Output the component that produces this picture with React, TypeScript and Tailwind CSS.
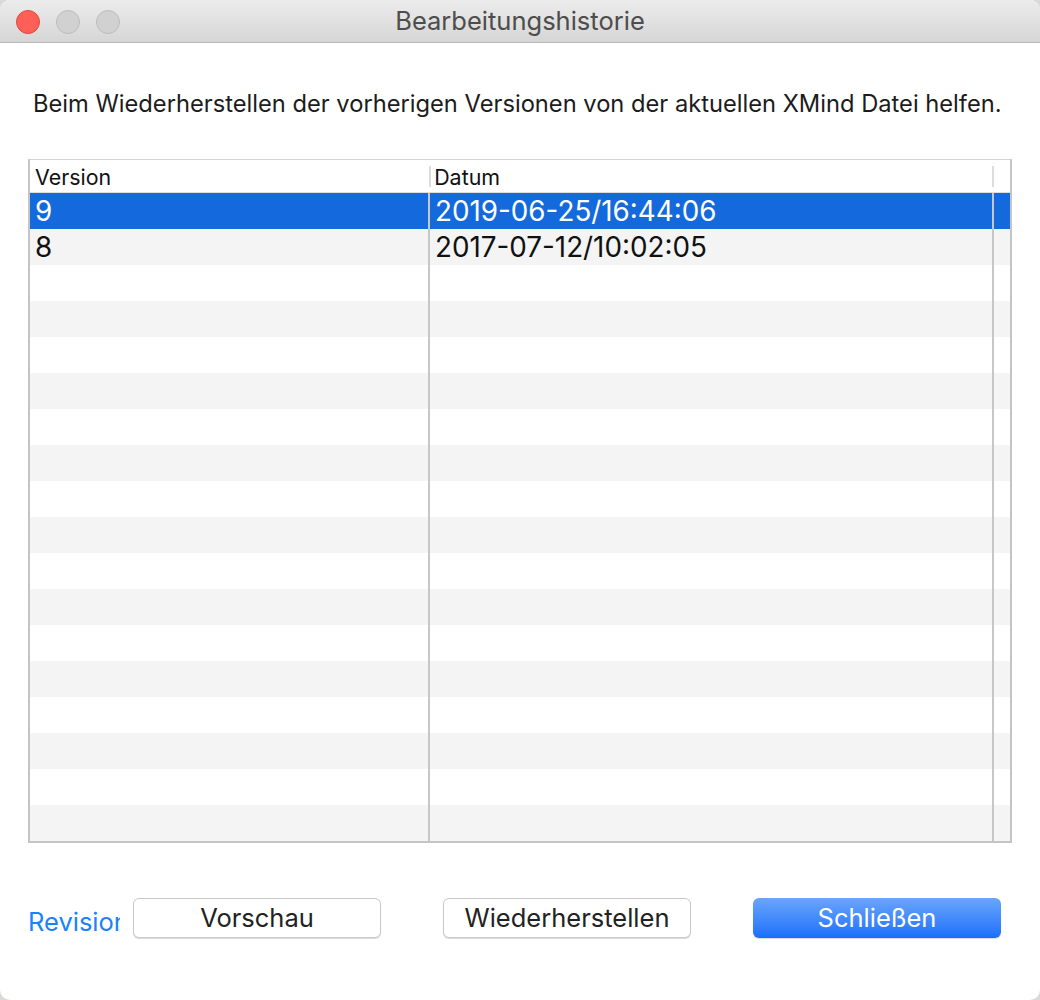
import React from "react";

const rows = [
  { version: "9", date: "2019-06-25/16:44:06" },
  { version: "8", date: "2017-07-12/10:02:05" },
  ...Array.from({ length: 16 }, () => ({ version: "", date: "" })),
];

const font = { fontFamily: "Inter, 'Noto Sans', sans-serif" };

export default function App() {
  return (
    <div className="h-[1000px] w-[1040px] bg-[#d9d9d6]" style={font}>
      <div className="flex h-full flex-col overflow-hidden rounded-[10px] bg-white">
        {/* title bar */}
        <div className="relative flex h-[43px] shrink-0 items-center justify-center border-b border-[#b9b9b9] bg-gradient-to-b from-[#ececec] to-[#d6d6d6]">
          <div className="absolute left-[16px] top-[10px] flex gap-[16px]">
            <span className="h-[24px] w-[24px] rounded-full border border-[#e2463f] bg-[#fe5f57]" />
            <span className="h-[24px] w-[24px] rounded-full border border-[#bcbcbc] bg-[#d1d1d1]" />
            <span className="h-[24px] w-[24px] rounded-full border border-[#bcbcbc] bg-[#d1d1d1]" />
          </div>
          <span className="text-[25.5px] leading-none text-[#4d4d4d]">Bearbeitungshistorie</span>
        </div>

        <div className="flex flex-col px-[28px]">
          <p className="mt-[47px] h-[28px] whitespace-nowrap pl-[5px] text-[23.7px] leading-[28px] text-[#1c1c1c]">
            Beim Wiederherstellen der vorherigen Versionen von der aktuellen XMind Datei helfen.
          </p>

          {/* table */}
          <div className="mt-[41px] w-[984px] border-t border-b-2 border-l-2 border-r-2 border-t-[#d4d4d4] border-b-[#c4c4c4] border-l-[#c4c4c4] border-r-[#c4c4c4]">
            <div className="flex h-[33px] items-center border-b border-[#dedede] bg-white text-[21.4px] text-[#111]">
              <div className="flex h-full w-[400px] items-center pl-[5px] pt-[2px]">Version</div>
              <div className="h-[21px] w-[2px] bg-[#dcdcdc]" />
              <div className="flex h-full w-[562px] items-center pl-[3px] pt-[2px]">Datum</div>
              <div className="h-[21px] w-[2px] bg-[#dcdcdc]" />
              <div className="w-[16px]" />
            </div>
            {rows.map((r, i) => {
              const selected = i === 0;
              const bg = selected ? "bg-[#1469dd] text-white" : i % 2 === 1 ? "bg-[#f3f4f3] text-[#111]" : "bg-white text-[#111]";
              return (
                <div key={i} className={`flex h-[36px] items-center text-[27.8px] leading-none ${bg}`}>
                  <div className="flex h-full w-[400px] items-center border-r-2 border-[#c7c7c7] pl-[5px] pt-[2px]">
                    {r.version}
                  </div>
                  <div className="flex h-full w-[564px] items-center border-r-2 border-[#c7c7c7] pl-[5px] pt-[2px]">
                    {r.date}
                  </div>
                  <div className="w-[16px]" />
                </div>
              );
            })}
          </div>

          {/* buttons */}
          <div className="mt-[55px] flex h-[40px] items-center">
            <div className="w-[92px] overflow-hidden whitespace-nowrap pt-[8px] text-[25.5px] leading-none text-[#1a82fb]">
              Revision
            </div>
            <button className="ml-[13px] h-[40px] w-[248px] rounded-[6px] border border-[#c9c9c9] bg-white text-[25.5px] leading-none text-[#222] shadow-[0_1px_1px_rgba(0,0,0,0.15)]">
              Vorschau
            </button>
            <button className="ml-[62px] h-[40px] w-[248px] rounded-[6px] border border-[#c9c9c9] bg-white text-[25.5px] leading-none text-[#222] shadow-[0_1px_1px_rgba(0,0,0,0.15)]">
              Wiederherstellen
            </button>
            <button className="ml-[62px] h-[40px] w-[248px] rounded-[6px] bg-gradient-to-b from-[#69a5fb] to-[#1a6efb] text-[25.5px] leading-none text-white shadow-[0_1px_1px_rgba(0,0,0,0.15)]">
              Schließen
            </button>
          </div>
        </div>
      </div>
    </div>
  );
}
